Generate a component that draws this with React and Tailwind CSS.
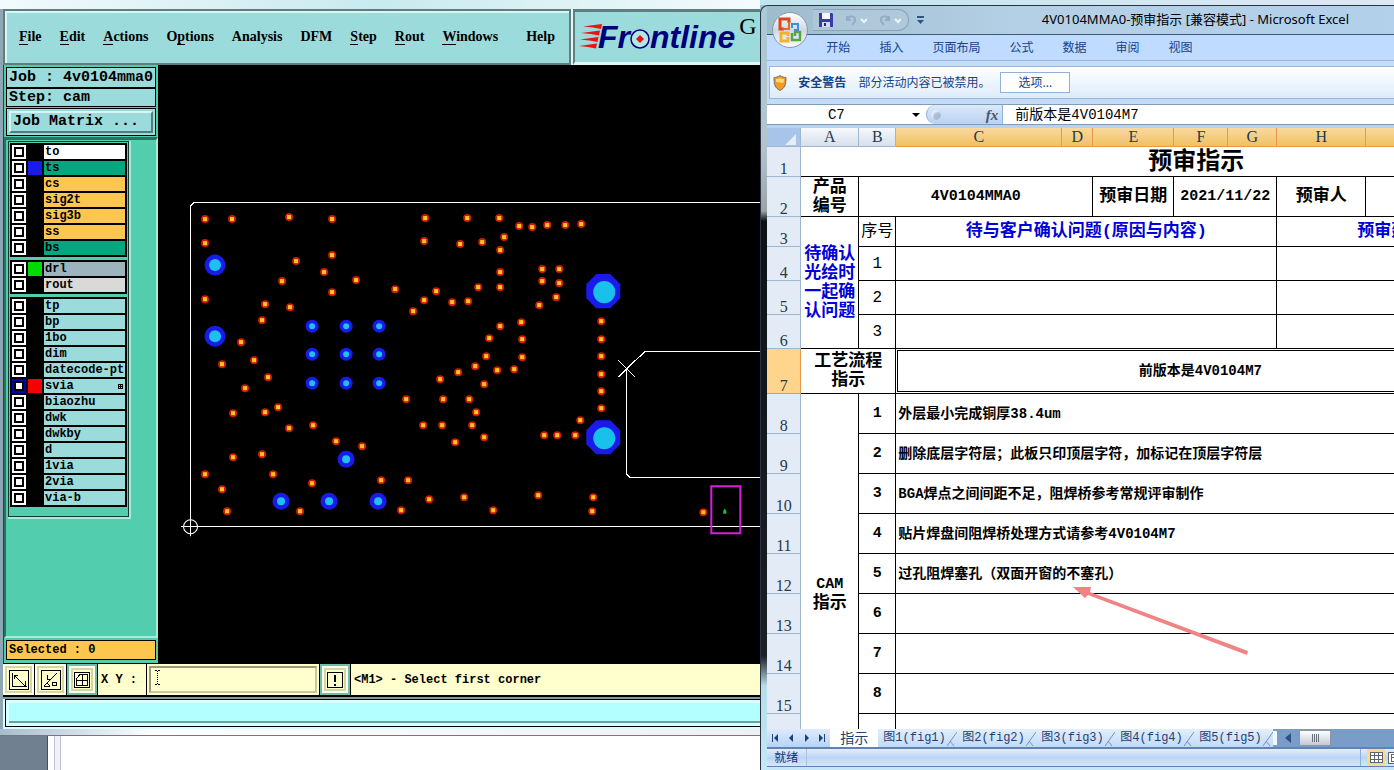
import React, { useState } from "react";

const menus = [
  { name: "File", key: 0 },
  { name: "Edit", key: 0 },
  { name: "Actions", key: 0 },
  { name: "Options", key: 1 },
  { name: "Analysis" },
  { name: "DFM" },
  { name: "Step", key: 0 },
  { name: "Rout", key: 0 },
  { name: "Windows", key: 0 },
];

const layerGroups = [
  [
    { name: "to", bg: "bg-white" },
    { name: "ts", bg: "bg-[#03a67e]", swatch: "bg-[#1a1aea]" },
    { name: "cs", bg: "bg-[#fdc64f]" },
    { name: "sig2t", bg: "bg-[#fdc64f]" },
    { name: "sig3b", bg: "bg-[#fdc64f]" },
    { name: "ss", bg: "bg-[#fdc64f]" },
    { name: "bs", bg: "bg-[#03a67e]" },
  ],
  [
    { name: "drl", bg: "bg-[#9bb4be]", swatch: "bg-[#00dc00]" },
    { name: "rout", bg: "bg-[#d9d9d9]" },
  ],
  [
    { name: "tp", bg: "bg-[#9cdbdb]" },
    { name: "bp", bg: "bg-[#9cdbdb]" },
    { name: "1bo", bg: "bg-[#9cdbdb]" },
    { name: "dim", bg: "bg-[#9cdbdb]" },
    { name: "datecode-pt", bg: "bg-[#9cdbdb]" },
    { name: "svia", bg: "bg-[#9cdbdb]", swatch: "bg-[#f80000]", work: true },
    { name: "biaozhu", bg: "bg-[#9cdbdb]" },
    { name: "dwk", bg: "bg-[#9cdbdb]" },
    { name: "dwkby", bg: "bg-[#9cdbdb]" },
    { name: "d", bg: "bg-[#9cdbdb]" },
    { name: "1via", bg: "bg-[#9cdbdb]" },
    { name: "2via", bg: "bg-[#9cdbdb]" },
    { name: "via-b", bg: "bg-[#9cdbdb]" },
  ],
];

const vias = [
  [205, 219], [232, 219], [289, 217], [332, 219], [425, 218], [467, 218],
  [205, 243], [424, 241], [460, 244], [332, 255], [296, 261], [324, 272],
  [282, 281], [356, 280], [332, 292], [205, 299], [265, 304], [290, 307],
  [262, 320], [395, 289], [436, 291], [424, 300], [452, 302], [468, 301],
  [413, 311], [241, 342], [222, 364], [254, 360], [268, 377], [245, 388],
  [233, 413], [265, 412], [278, 407], [289, 428], [313, 425], [336, 441],
  [362, 446], [233, 457], [262, 454], [273, 474], [205, 474], [222, 489],
  [227, 511], [312, 483], [300, 511], [381, 480], [408, 480], [401, 510],
  [429, 499], [464, 497], [458, 372], [440, 379], [406, 399], [443, 399],
  [423, 425], [442, 425], [455, 442], [499, 218], [519, 226], [532, 227],
  [547, 225], [565, 225], [581, 224], [504, 237], [482, 242], [500, 250],
  [500, 272], [500, 287], [478, 287], [542, 269], [559, 269], [542, 281],
  [559, 283], [556, 297], [539, 305], [521, 322], [500, 326], [489, 338],
  [522, 339], [486, 356], [475, 366], [522, 357], [497, 370], [514, 369],
  [484, 384], [469, 399], [476, 412], [472, 425], [484, 437], [601, 321],
  [601, 339], [601, 356], [601, 374], [601, 391], [601, 408], [580, 420],
  [544, 435], [557, 435], [575, 435], [538, 495], [493, 510], [593, 497],
  [592, 511], [703, 512],
];

const pads = [
  [215, 265, 10, 6], [215, 336, 10, 6],
  [312, 326, 6, 3], [346, 326, 6, 3], [379, 326, 6, 3],
  [312, 354, 6, 3], [346, 354, 6, 3], [379, 354, 6, 3],
  [312, 383, 6, 3], [346, 383, 6, 3], [379, 383, 6, 3],
  [346, 459, 8, 4], [281, 501, 8, 4], [329, 501, 8, 4], [378, 501, 8, 4],
];

const ribbonTabs = ["开始", "插入", "页面布局", "公式", "数据", "审阅", "视图"];
const columns = ["A", "B", "C", "D", "E", "F", "G", "H", "", ""];

const camNotes = [
  "外层最小完成铜厚38.4um",
  "删除底层字符层；此板只印顶层字符，加标记在顶层字符层",
  "BGA焊点之间间距不足，阻焊桥参考常规评审制作",
  "贴片焊盘间阻焊桥处理方式请参考4V0104M7",
  "过孔阻焊塞孔（双面开窗的不塞孔）",
  "",
  "",
  "",
  "",
  "",
];

const sheets = ["图1(fig1)", "图2(fig2)", "图3(fig3)", "图4(fig4)", "图5(fig5)"];

function MenuLabel({ item }) {
  if (item.key === undefined) return item.name;
  return (
    <>
      {item.name.slice(0, item.key)}
      <span className="border-b border-black">{item.name[item.key]}</span>
      {item.name.slice(item.key + 1)}
    </>
  );
}

function FrontlineLogo() {
  return (
    <div className="flex items-center font-['Liberation_Sans',sans-serif] text-[32px] leading-8 font-bold italic text-[#00007c]">
      <svg width="23" height="26" viewBox="0 0 23 26" className="-mr-1" fill="#ee1111">
        <path d="M4 2.500L23 0l-1 5-8-1.500z" />
        <path d="M2 9L21 6.500l-1 5-8-1.500z" />
        <path d="M1 15.500L19.500 13l-1 5-8-1.500z" />
        <path d="M0 22L18 19.500l-1 5-8-1.500z" />
      </svg>
      Fr
      <svg width="20" height="26" viewBox="0 0 20 26">
        <circle cx="10" cy="15" r="9" fill="#b4e6e6" stroke="#00007c" strokeWidth="1.5" />
        <path d="M10 11 l4 4 -4 4 -4 -4z" fill="#ee1111" />
      </svg>
      ntline
    </div>
  );
}

function LayerRow({ layer }) {
  const [shown, setShown] = useState(Boolean(layer.swatch));
  return (
    <div className="flex h-4 gap-[2px]">
      <input
        id={`layer-${layer.name}`}
        type="checkbox"
        checked={shown}
        onChange={() => setShown(!shown)}
        className={`size-[14px] shrink-0 appearance-none border-2 bg-white shadow-[inset_0_0_0_2px_black] ${
          layer.work ? "border-[#0000b4]" : "border-white"
        }`}
      />
      <span className={`h-[14px] w-[14px] shrink-0 ${layer.swatch || "bg-black"}`} />
      <label
        htmlFor={`layer-${layer.name}`}
        className={`flex h-[14px] min-w-0 flex-1 items-center overflow-hidden pl-[1px] text-xs leading-[14px] font-bold whitespace-nowrap ${layer.bg}`}
      >
        {layer.name}
        {layer.work && (
          <svg width="5" height="5" viewBox="0 0 5 5" className="mr-[2px] ml-auto" shapeRendering="crispEdges">
            <path d="M0 .5h5M0 2.5h5M0 4.5h5M.5 0v5M2.5 0v5M4.5 0v5" stroke="#000" />
          </svg>
        )}
      </label>
    </div>
  );
}

function BoardCanvas() {
  return (
    <svg viewBox="158 65 602 598" className="block w-full" fill="none">
      <g stroke="#fff" shapeRendering="crispEdges">
        <path d="M761 202.5H194L190.5 206V536M181 526.5H761" />
        <path d="M761 351.5H644.5L626.5 369V474L630 477.5H761" />
        <path d="M618 360l17 17M635 360l-17 17" />
      </g>
      <circle cx="190.5" cy="526.5" r="7" stroke="#fff" />
      <path d="M190.5 518v18" stroke="#fff" />
      {vias.map(([x, y]) => (
        <g key={`${x}-${y}`}>
          <circle cx={x} cy={y} r="4" fill="#cc1a0a" />
          <rect x={x - 2} y={y - 2} width="4" height="4" fill="#ffc81e" />
        </g>
      ))}
      {pads.map(([x, y, outer, inner]) => (
        <g key={`${x}-${y}`}>
          <circle cx={x} cy={y} r={outer + 0.5} fill="#1a1aea" />
          <circle cx={x} cy={y} r={inner} fill="#1ec0f0" />
        </g>
      ))}
      {[291, 437].map((y) => (
        <g key={y}>
          <path
            d={`M596 ${y - 17}h14l10 10v14l-10 10h-14l-10 -10v-14z`}
            fill="#1a1aea"
          />
          <circle cx="604" cy={y + 1} r="11" fill="#19c0ea" />
        </g>
      ))}
      <rect x="711" y="486" width="29" height="47" stroke="#d81fd8" strokeWidth="2" />
      <path d="M723 513.500v-3l1.500-2 1.500 2v3z" fill="#1ec81e" />
    </svg>
  );
}

function CamWindow() {
  const toolButton =
    "flex items-center justify-center border-2 border-[#fffff0] bg-[#ffffce] shadow-[inset_0_0_0_2px_#d6d6a4]";

  return (
    <section className="flex min-h-0 min-w-0 flex-col overflow-hidden bg-white font-['Liberation_Mono',monospace] text-black">
      <div className="h-[9px] shrink-0 bg-linear-to-r from-[#f2fafc] via-[#c8eaf0] to-[#f4fbfd]" />
      <div className="flex min-h-0 flex-1 flex-col border-l-[3px] border-[#8fa6b4] bg-black">
        <header className="flex h-14 shrink-0 bg-[#e4f7f7]">
          <nav className="flex w-[568px] items-center border-2 border-[#5f7f7d] bg-[#9cdbdb] px-[14px] font-['Liberation_Serif',serif] text-sm font-bold shadow-[inset_2px_2px_0_#d8f5f5]">
            <div className="flex flex-1 gap-[18px]">
              {menus.map((item) => (
                <button key={item.name} type="button" className="leading-[18px]">
                  <MenuLabel item={item} />
                </button>
              ))}
            </div>
            <button type="button">Help</button>
          </nav>
          <div className="ml-[2px] flex min-w-0 flex-1 overflow-hidden border-t-[3px] border-b-[3px] border-l-2 border-t-[#5f7f7d] border-b-[#e4f7f7] border-l-[#5f7f7d] bg-[#9cdbdb] pl-1">
            <div className="flex items-center">
              <FrontlineLogo />
            </div>
            <span className="ml-1 font-['Liberation_Serif',serif] text-2xl leading-7">G</span>
          </div>
        </header>

        <div className="flex min-h-0 flex-1">
          <aside className="flex w-[155px] shrink-0 flex-col border-l border-[#1f4a40] bg-[#52cdae]">
            <div className="m-[2px] mb-0 border border-black bg-[#9cdbdb] text-[15px] font-bold">
              <p className="h-[19px] overflow-hidden pl-[2px] leading-[19px] whitespace-nowrap">Job : 4v0104mma0</p>
              <p className="h-[19px] border-t-2 border-black pl-[2px] leading-[17px]">Step: cam</p>
            </div>
            <div className="mx-[2px] my-[1px] border border-black bg-[#9cdbdb] p-[2px]">
              <button
                type="button"
                className="block h-[22px] w-full border-2 border-t-[#d8f5f5] border-r-[#4c7f7d] border-b-[#4c7f7d] border-l-[#d8f5f5] pl-[2px] text-left text-[15px] leading-[18px] font-bold"
              >
                Job Matrix ...
              </button>
            </div>
            <div className="flex flex-1 flex-col border-t-[3px] border-r-2 border-b-2 border-l-2 border-t-[#2c7260] border-r-[#a8ecd8] border-b-[#a8ecd8] border-l-[#2c7260]">
              <div className="mt-[1px] mr-[25px] ml-[2px] border-r-2 border-b-2 border-[#a8ecd8]">
                <div className="space-y-[3px] border border-[#14382f] px-[1px] pt-[1px] pb-[9px]">
                  {layerGroups.map((group) => (
                    <div key={group[0].name} className="bg-black px-[2px] pt-[2px]">
                      {group.map((layer) => (
                        <LayerRow key={layer.name} layer={layer} />
                      ))}
                    </div>
                  ))}
                </div>
              </div>
            </div>
            <p className="m-[2px] mb-[3px] h-5 border border-black bg-[#fdc64f] pl-[2px] text-xs leading-[18px] font-bold">
              Selected : 0
            </p>
          </aside>
          <div className="min-w-0 flex-1 overflow-hidden bg-black">
            <BoardCanvas />
          </div>
        </div>

        <div className="flex h-[34px] shrink-0 gap-[1px] border-t border-b-2 border-black bg-black text-xs font-bold">
          <button type="button" aria-label="Pan" className={`w-[31px] ${toolButton}`}>
            <svg width="20" height="20" viewBox="0 0 20 20" fill="none" stroke="#000" shapeRendering="crispEdges">
              <rect x=".5" y=".5" width="19" height="19" />
              <path d="M3.500 3v13.500h14M5 5l11 11M5 9V5h4M16 11v5h-5" />
            </svg>
          </button>
          <button type="button" aria-label="Measure" className={`w-[31px] ${toolButton}`}>
            <svg width="20" height="20" viewBox="0 0 20 20" fill="none" stroke="#000" shapeRendering="crispEdges">
              <rect x=".5" y=".5" width="19" height="19" />
              <path d="M3 16L16 3M3 16.500h6M6 5v4h3M11.500 12.500h4v3h-4zM6 13l3 3" />
            </svg>
          </button>
          <div className="flex w-[30px] bg-[#6cc0a8] p-[2px]">
            <button type="button" aria-label="Grid" className={`flex-1 ${toolButton}`}>
              <svg width="16" height="16" viewBox="0 0 16 16" fill="none" stroke="#000" shapeRendering="crispEdges">
                <rect x=".5" y=".5" width="15" height="15" />
                <path d="M2.500 6.500L6 2.500h7.500v11h-11zM8.500 3v11M3 8.500h11" />
              </svg>
            </button>
          </div>
          <label htmlFor="coords" className="w-12 bg-[#ffffce] pl-[3px] leading-8">
            X Y :
          </label>
          <div className="w-[172px] bg-[#ffffce] p-[2px]">
            <div className="flex h-full border-2 border-t-[#9a9a78] border-r-[#c8c898] border-b-[#c8c898] border-l-[#9a9a78] pl-1">
              <svg width="5" height="15" viewBox="0 0 5 15" className="mt-[2px] shrink-0" stroke="#000" shapeRendering="crispEdges">
                <path d="M0 .5h2M3 .5h2M0 14.500h2M3 14.500h2" />
                <path d="M2.500 1v13" strokeDasharray="1 1" />
              </svg>
              <input
                id="coords"
                type="text"
                className="min-w-0 flex-1 bg-[#ffffce] outline-none"
              />
            </div>
          </div>
          <div className="flex w-[30px] bg-[#6cc0a8] p-[2px]">
            <button type="button" aria-label="Alert" className={`flex-1 ${toolButton}`}>
              <svg width="16" height="16" viewBox="0 0 16 16" fill="none" stroke="#000" shapeRendering="crispEdges">
                <rect x=".5" y=".5" width="15" height="15" />
                <path d="M8 3v7M8 12v2" strokeWidth="2" />
              </svg>
            </button>
          </div>
          <p className="min-w-0 flex-1 overflow-hidden bg-[#ffffce] pl-[3px] leading-8 whitespace-nowrap">
            &lt;M1&gt; - Select first corner
          </p>
        </div>
        <div className="h-8 shrink-0 border-t-2 border-[#7f9c9a] bg-[#d8ffff] pb-[2px] pl-[2px]">
          <div className="h-full border border-r-0 border-black bg-[#b3ffff] shadow-[inset_3px_3px_0_#d8ffff,inset_0_-3px_0_#d8ffff,inset_0_-5px_0_#6f9f9f]" />
        </div>
      </div>
      <div className="h-[7px] shrink-0 border-b border-[#707880] bg-linear-to-r from-[#a8bcd0] via-white via-20% to-[#f0f0f0]" />
      <div className="flex h-[34px] shrink-0 bg-white">
        <div className="w-12 border-r border-[#505050] bg-[#708090]" />
        <div className="ml-[6px] w-[7px] border-x border-[#c0c4cc] bg-[#eef2f8]" />
      </div>
    </section>
  );
}

function OfficeOrb() {
  return (
    <svg width="38" height="38" viewBox="0 0 38 38" className="absolute top-[5px] left-1" fill="none">
      <defs>
        <linearGradient id="orb" x1="0" y1="0" x2="0" y2="1">
          <stop offset="0" stopColor="#ffffff" />
          <stop offset=".5" stopColor="#cfd8e6" />
          <stop offset="1" stopColor="#f8fbff" />
        </linearGradient>
      </defs>
      <circle cx="19" cy="19" r="17.500" fill="url(#orb)" stroke="#8795ab" />
      <path d="M18 12V8H9v10h4" stroke="#d8481c" strokeWidth="3" />
      <path d="M18 11v7h-6" stroke="#e86a24" strokeWidth="2" />
      <path d="M21 17v-4h6v6h-4" stroke="#3f8fd8" strokeWidth="2" />
      <path d="M17 26v4h-7v-8h7v3" stroke="#f2b32c" strokeWidth="3" />
      <path d="M21 22v7h8v-8h-5v4" stroke="#5aa63c" strokeWidth="2.500" />
    </svg>
  );
}

function TitleBar() {
  return (
    <div className="flex h-[28px] shrink-0 items-center bg-linear-to-r from-[#9dbccc] via-[#b4d0e6] via-40% to-[#b3d0ec] pl-[46px]">
      <div className="flex h-[22px] w-24 items-center gap-3 rounded-r-full border border-l-0 border-[#8ba4bc] bg-[#b4cbdc]/60 pl-[6px]">
        <button type="button" aria-label="保存">
          <svg width="14" height="14" viewBox="0 0 14 14">
            <path d="M0 0h13l1 1v13H0z" fill="#3b3aa8" />
            <rect x="3" y="0" width="8" height="6" fill="#f4f6fc" />
            <rect x="3" y="9" width="8" height="5" fill="#d4dcf0" />
            <rect x="5" y="10" width="2" height="3" fill="#26267c" />
          </svg>
        </button>
        <button type="button" aria-label="撤消">
          <svg width="22" height="12" viewBox="0 0 22 12" fill="none" stroke="#93adc6" strokeWidth="2">
            <path d="M2 2v4h4M2 6c2-5 9-5 8 1l-3 4" />
            <path d="M16 5l3 3 3-3" stroke="#eef4fa" />
          </svg>
        </button>
        <button type="button" aria-label="恢复">
          <svg width="22" height="12" viewBox="0 0 22 12" fill="none" stroke="#93adc6" strokeWidth="2">
            <path d="M10 2v4H6M10 6C8 1 1 1 2 7l3 4" />
            <path d="M16 5l3 3 3-3" stroke="#eef4fa" />
          </svg>
        </button>
      </div>
      <button type="button" aria-label="自定义快速访问工具栏" className="ml-2">
        <svg width="7" height="8" viewBox="0 0 7 8">
          <path d="M0 0h7v2H0zM0 4h7L3.500 8z" fill="#2f5480" />
        </svg>
      </button>
      <h1 className="mr-[45px] ml-auto text-[13px] whitespace-pre text-black">
        4V0104MMA0-预审指示 [兼容模式] - Microsoft Excel
      </h1>
    </div>
  );
}

function SheetTable() {
  const head = "border-r border-b border-[#9eb6ce] bg-[#e3ebf6] p-0 text-center align-bottom font-['Liberation_Serif',serif] text-base leading-[14px] font-normal text-[#26384e]";
  const cell = "border-r border-b border-black p-0 text-center";
  const note = "border-b border-black p-0 pl-[2px] text-left text-sm font-bold whitespace-nowrap";

  return (
    <table className="w-[824px] table-fixed border-separate border-spacing-0 bg-white font-['Liberation_Mono','Noto_Sans_CJK_SC',monospace] leading-[19px]">
      <colgroup>
        <col className="w-[34px]" />
        <col className="w-[58px]" />
        <col className="w-[37px]" />
        <col className="w-[166px]" />
        <col className="w-[31px]" />
        <col className="w-[81px]" />
        <col className="w-[54px]" />
        <col className="w-[49px]" />
        <col className="w-[89px]" />
        <col className="w-[139px]" />
        <col className="w-[86px]" />
      </colgroup>
      <thead>
        <tr className="h-[19px]">
          <th className="border-r border-b border-[#9eb6ce] bg-[#a9c4e9] p-0">
            <svg width="11" height="11" viewBox="0 0 11 11" className="mt-1 mr-1 ml-auto">
              <path d="M11 0v11H0z" fill="#e4edf8" />
            </svg>
          </th>
          {columns.map((name, i) => (
            <th
              key={i}
              className={`border-r border-b p-0 text-center font-['Liberation_Serif',serif] text-base leading-[18px] font-normal text-[#26384e] ${
                i < 2
                  ? "border-[#9eb6ce] bg-linear-to-b from-[#f6f9fc] to-[#d6dfec]"
                  : "border-[#e69a49] bg-linear-to-b from-[#f9d99f] to-[#f1c15f]"
              }`}
            >
              {name}
            </th>
          ))}
        </tr>
      </thead>
      <tbody>
        <tr className="h-[30px]">
          <th className={head}>1</th>
          <td colSpan={10} className="border-b border-black p-0 text-center align-bottom text-2xl leading-[26px] font-bold">
            预审指示
          </td>
        </tr>
        <tr className="h-10">
          <th className={head}>2</th>
          <td className={`${cell} px-2 text-[17px] font-bold`}>产品编号</td>
          <td colSpan={3} className={`${cell} text-[15px] font-bold`}>4V0104MMA0</td>
          <td className={`${cell} text-[17px] font-bold`}>预审日期</td>
          <td colSpan={2} className={`${cell} text-[15px] font-bold`}>2021/11/22</td>
          <td className={`${cell} text-[17px] font-bold`}>预审人</td>
          <td colSpan={2} className={cell} />
        </tr>
        <tr className="h-[30px]">
          <th className={head}>3</th>
          <td rowSpan={4} className={`${cell} text-[17px] font-bold text-[#0000d8]`}>
            待确认光绘时一起确认问题
          </td>
          <td className={`${cell} text-base`}>序号</td>
          <td colSpan={5} className={`${cell} text-[17px] font-bold text-[#0000d8]`}>
            待与客户确认问题(原因与内容)
          </td>
          <td colSpan={2} className="border-b border-black p-0 text-center text-[17px] font-bold text-[#0000d8]">
            预审建议
          </td>
          <td className="border-b border-black p-0" />
        </tr>
        {[1, 2, 3].map((n) => (
          <tr key={n} className="h-[34px]">
            <th className={head}>{n + 3}</th>
            <td className={`${cell} text-base`}>{n}</td>
            <td colSpan={5} className={cell} />
            <td colSpan={3} className={cell} />
          </tr>
        ))}
        <tr className="h-[45px]">
          <th className="border-r border-b border-[#e69a49] bg-[#ffd58d] p-0 text-center align-bottom font-['Liberation_Serif',serif] text-base leading-[14px] font-normal text-[#26384e]">
            7
          </th>
          <td colSpan={2} className={`${cell} px-3 text-[17px] font-bold`}>
            工艺流程指示
          </td>
          <td
            colSpan={7}
            className={`${cell} text-sm font-bold shadow-[inset_0_0_0_1px_white,inset_0_0_0_2px_black]`}
          >
            前版本是4V0104M7
          </td>
          <td className="border-b border-black p-0" />
        </tr>
        {camNotes.map((text, i) => (
          <tr key={i} className="h-10">
            <th className={head}>{i < 8 ? i + 8 : ""}</th>
            {i === 0 && (
              <td rowSpan={camNotes.length} className={`${cell} text-[17px] font-bold`}>
                <span className="text-[15px]">CAM</span>
                <br />
                指示
              </td>
            )}
            <td className={`${cell} text-[15px] font-bold`}>{i < 8 ? i + 1 : ""}</td>
            <td colSpan={8} className={note}>{text}</td>
          </tr>
        ))}
      </tbody>
    </table>
  );
}

function SheetTabs() {
  const arrows = ["M2 1v8h1V1zM8 1v8L4 5z", "M7 1v8L3 5z", "M3 1v8l4-4z", "M2 1v8l4-4zM7 1v8h1V1z"];
  return (
    <div className="flex h-[18px] shrink-0 items-stretch overflow-hidden bg-[#7a9cc9] text-[#1f3f77]">
      <div className="flex w-[63px] shrink-0 items-center justify-around bg-linear-to-b from-[#dcebfc] to-[#b9d3f5]">
        {arrows.map((d) => (
          <button key={d} type="button" aria-label="滚动工作表">
            <svg width="10" height="10" viewBox="0 0 10 10" fill="#1f3f77">
              <path d={d} />
            </svg>
          </button>
        ))}
      </div>
      <button type="button" className="w-12 shrink-0 bg-white text-center text-sm leading-[18px]">
        指示
      </button>
      {sheets.map((name) => (
        <button
          key={name}
          type="button"
          className="flex w-[79px] shrink-0 items-center bg-linear-to-b from-[#e2eefb] to-[#c3daf6] text-xs leading-[17px] font-['Liberation_Mono','Noto_Sans_CJK_SC',monospace]"
        >
          <span className="ml-[5px] whitespace-nowrap">{name}</span>
          <svg width="10" height="16" viewBox="0 0 10 16" className="ml-auto" fill="none" stroke="#6f93c4">
            <path d="M0 16L10 2M3 11l4 5" />
          </svg>
        </button>
      ))}
      <div className="my-[2px] w-1 shrink-0 bg-[#f2f7fd]" />
      <button type="button" aria-label="向左滚动" className="ml-2 shrink-0">
        <svg width="6" height="10" viewBox="0 0 6 10">
          <path d="M6 0v10L0 5z" fill="#2c4f86" />
        </svg>
      </button>
      <div className="my-[1px] ml-2 flex w-8 shrink-0 items-center justify-center gap-[1px] border border-[#8a94a4] bg-linear-to-b from-white to-[#c4cad4]">
        <span className="h-2 w-px bg-[#68707c]" />
        <span className="h-2 w-px bg-[#68707c]" />
        <span className="h-2 w-px bg-[#68707c]" />
        <span className="h-2 w-px bg-[#68707c]" />
      </div>
    </div>
  );
}

function ExcelWindow() {
  return (
    <section className="flex min-h-0 min-w-0 flex-col bg-linear-to-b from-[#9cc4d8] to-[#c8e4f2] font-['Noto_Sans','Noto_Sans_CJK_SC',sans-serif]">
      <div className="h-[5px] shrink-0 bg-linear-to-r from-[#bfe6ee] to-[#dce8f4]" />
      <div className="flex min-h-0 flex-1 flex-col rounded-tl-lg border-t border-l border-[#2a3442] bg-[linear-gradient(to_bottom,#a9cad8_0px,#b4c4cc_140px,#9aa4aa_205px,#0c1216_215px,#1c2024_650px,#b8dce8_680px,#c4e6f6_760px)] pb-[3px] pl-[6px]">
        <div className="relative flex min-h-0 flex-1 flex-col overflow-hidden">
          <TitleBar />
          <OfficeOrb />
          <nav className="flex h-[27px] shrink-0 items-center gap-[29px] border-t border-b border-t-[#3f5877] border-b-[#9ab8de] bg-[#bfdbff] pl-[59px] text-xs text-[#15428b]">
            {ribbonTabs.map((tab) => (
              <button key={tab} type="button" className="shrink-0">
                {tab}
              </button>
            ))}
          </nav>

          <div className="shrink-0 bg-[#c5dcf8] pt-[5px] pb-[5px] pl-[2px]">
            <div className="flex h-[33px] items-center border border-r-0 border-[#9ab8de] bg-linear-to-b from-white to-[#dcecfb] pl-[3px] text-xs text-[#15428b]">
              <svg width="14" height="16" viewBox="0 0 14 16">
                <path d="M7 .5c2 1.500 4 2 6 2 0 7-1 10.500-6 13-5-2.500-6-6-6-13 2 0 4-.5 6-2z" fill="#f59a1c" stroke="#6b6f78" />
                <path d="M7 3c1 1 3 1 4 1 0 2 0 3-1 4L3 7V4c1 0 3 0 4-1z" fill="#ffd774" />
              </svg>
              <strong className="ml-[11px] shrink-0">安全警告</strong>
              <span className="ml-3 shrink-0">部分活动内容已被禁用。</span>
              <button type="button" className="ml-[10px] h-[21px] w-[70px] shrink-0 border border-[#8fb0d8] bg-white leading-[18px]">
                选项...
              </button>
            </div>
          </div>

          <div className="flex h-[21px] shrink-0 border-y border-[#7f9db9] bg-white font-['Liberation_Mono','Noto_Sans_CJK_SC',monospace]">
            <input
              aria-label="名称框"
              defaultValue="C7"
              className="w-[138px] shrink-0 bg-white text-center text-sm outline-none"
            />
            <button type="button" aria-label="名称列表" className="flex w-[21px] shrink-0 items-center justify-center">
              <svg width="8" height="4" viewBox="0 0 8 4">
                <path d="M0 0h8L4 4z" />
              </svg>
            </button>
            <div className="flex w-[77px] shrink-0 items-center justify-between rounded-l-full border border-t-0 border-b-0 border-[#8fb0d8] bg-linear-to-b from-[#dbe9fa] to-[#b8d2f2] pr-1 pl-1">
              <span className="size-[10px] rounded-full bg-[#a9bcd4] shadow-[inset_2px_2px_2px_#e8f0fa]" />
              <button type="button" className="font-['Liberation_Serif',serif] text-[15px] leading-4 font-bold italic text-[#4f5866]">
                fx
              </button>
            </div>
            <input
              aria-label="编辑栏"
              defaultValue="前版本是4V0104M7"
              className="min-w-0 flex-1 bg-white pl-3 text-sm outline-none"
            />
          </div>
          <div className="h-[3px] shrink-0 bg-[#b9d2f0]" />

          <div className="relative min-h-0 flex-1 overflow-hidden bg-white">
            <SheetTable />
            <svg width="180" height="72" viewBox="0 0 180 72" className="absolute top-[457px] left-[305px]" fill="#f08484">
              <path d="M1 2l18 0-1 5L176 66l-1 4L16 10l-3 3z" />
            </svg>
          </div>

          <SheetTabs />
          <footer className="flex h-5 shrink-0 border-t-2 border-b border-[#5f83b5] bg-linear-to-b from-[#e2eefc] via-[#bcd5f5] to-[#d5e6fb] text-xs leading-[17px] text-[#15306b]">
            <span className="w-10 border-r border-[#a8c2e4] pl-[7px]">就绪</span>
            <div className="ml-auto flex w-[34px] shrink-0 overflow-hidden border-l border-[#8fb0d8] pl-[6px]">
              <button type="button" aria-label="普通" className="flex h-full w-[18px] shrink-0 items-center justify-center bg-[#fbd98c]">
                <svg width="13" height="11" viewBox="0 0 13 11" fill="#fff" stroke="#5c6470" shapeRendering="crispEdges">
                  <path d="M.5.500h12v10H.500zM.500 3.500h12M.500 7.500h12M4.500 0v11M8.500 0v11" />
                </svg>
              </button>
              <button type="button" aria-label="页面布局" className="flex h-full w-[18px] shrink-0 items-center pl-[3px]">
                <svg width="12" height="12" viewBox="0 0 12 12" fill="#fff" stroke="#5c6470" shapeRendering="crispEdges">
                  <path d="M.5.500h11v11H.500zM3.500 2.500h5v7h-5zM4 5.500h4" />
                </svg>
              </button>
            </div>
          </footer>
        </div>
      </div>
    </section>
  );
}

export default function App() {
  return (
    <main className="grid h-screen grid-cols-[6fr_5fr] grid-rows-[minmax(0,1fr)] overflow-hidden">
      <CamWindow />
      <ExcelWindow />
    </main>
  );
}
